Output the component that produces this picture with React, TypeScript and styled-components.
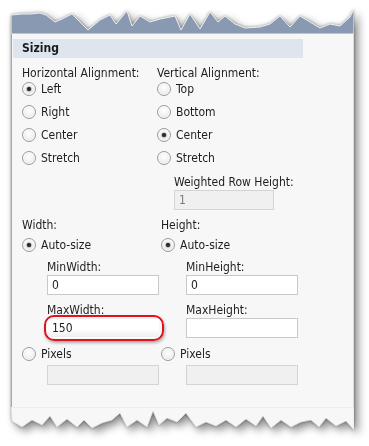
import React from "react";
import styled, { createGlobalStyle, css } from "styled-components";

const Global = createGlobalStyle`
  html, body { margin: 0; padding: 0; background: #ffffff; }
  body {
    font-family: "DejaVu Sans Condensed", "DejaVu Sans", Verdana, sans-serif;
    font-stretch: condensed;
    font-size: 12px;
    color: #1e1e1e;
  }
`;

const Page = styled.div`
  width: 369px;
  height: 446px;
  box-sizing: border-box;
  padding: 8px 0 0 11px;
  overflow: hidden;
`;

const Sheet = styled.div`
  width: 343px;
  display: flex;
  flex-direction: column;
  filter: drop-shadow(0 0 1.5px rgba(0, 0, 0, 0.35)) drop-shadow(4px 4px 4px rgba(0, 0, 0, 0.45));
`;

const Edge = styled.svg`
  display: block;
  width: 343px;
`;

const Body = styled.div`
  height: 373px;
  box-sizing: border-box;
  background: #f7f7f7;
  border-left: 1px solid #a8a8a8;
  border-right: 1px solid #dcdcdc;
  padding-top: 5px;
`;

const Header = styled.div`
  margin-left: 1px;
  width: 290px;
  height: 19px;
  line-height: 19px;
  background: #dfe5ee;
  padding-left: 9px;
  box-sizing: border-box;
  font-weight: bold;
  font-size: 12px;
  color: #1a1a1a;
`;

const Section = styled.div<{ $first: number; $top: number }>`
  display: grid;
  grid-template-columns: ${(p) => p.$first}px 1fr;
  padding-left: 10px;
  margin-top: ${(p) => p.$top}px;
`;

const Column = styled.div`
  display: flex;
  flex-direction: column;
`;

const Label = styled.div<{ $top?: number; $indent?: number }>`
  height: 16px;
  line-height: 16px;
  margin-top: ${(p) => p.$top ?? 0}px;
  margin-left: ${(p) => p.$indent ?? 0}px;
  white-space: nowrap;
`;

const RadioList = styled.div`
  display: flex;
  flex-direction: column;
  gap: 7px;
`;

const RadioRow = styled.div<{ $top?: number }>`
  display: flex;
  align-items: center;
  gap: 5px;
  height: 16px;
  margin-top: ${(p) => p.$top ?? 0}px;
  white-space: nowrap;
`;

const RadioCircle = styled.span<{ $checked?: boolean }>`
  width: 14px;
  height: 14px;
  box-sizing: border-box;
  border-radius: 50%;
  border: 1px solid #9b9b9b;
  background: radial-gradient(circle at 50% 40%, #ffffff 0%, #f3f3f3 45%, #d5d5d5 100%);
  box-shadow: inset 0 0 0 1px rgba(255, 255, 255, 0.8);
  display: flex;
  align-items: center;
  justify-content: center;
  flex: none;
  ${(p) =>
    p.$checked &&
    css`
      &::after {
        content: "";
        width: 4px;
        height: 4px;
        border-radius: 50%;
        background: #2a2a2a;
        box-shadow: 0 0 1px 0.5px rgba(40, 40, 40, 0.6);
      }
    `}
`;

const Field = styled.div<{ $top?: number; $indent?: number; $width: number; $disabled?: boolean; $highlight?: boolean }>`
  position: relative;
  width: ${(p) => p.$width}px;
  height: 20px;
  box-sizing: border-box;
  margin-top: ${(p) => p.$top ?? 0}px;
  margin-left: ${(p) => p.$indent ?? 0}px;
  border: 1px solid ${(p) => (p.$disabled ? "#d4d4d4" : "#c9c9c9")};
  background: ${(p) => (p.$disabled ? "#f0f0f0" : "#ffffff")};
  color: ${(p) => (p.$disabled ? "#7a7a7a" : "#222222")};
  padding-left: 4px;
  line-height: 18px;
  ${(p) =>
    p.$highlight &&
    css`
      border-color: transparent;
      background: linear-gradient(#ffffff 55%, #efefef);
      &::after {
        content: "";
        position: absolute;
        top: -4px;
        left: -4px;
        right: -6px;
        bottom: -4px;
        border: 2px solid #e0121c;
        border-radius: 10px;
        box-shadow: 1px 2px 3px rgba(0, 0, 0, 0.3);
      }
    `}
`;

const Radio = ({ label, checked, top }: { label: string; checked?: boolean; top?: number }) => (
  <RadioRow $top={top}>
    <RadioCircle $checked={checked} />
    <span>{label}</span>
  </RadioRow>
);

const SizeColumn = ({
  title,
  min,
  max,
  maxValue,
  highlight,
}: {
  title: string;
  min: string;
  max: string;
  maxValue: string;
  highlight?: boolean;
}) => (
  <Column>
    <Label>{title}</Label>
    <Radio label="Auto-size" checked top={4} />
    <Label $top={6} $indent={25}>{min}</Label>
    <Field $indent={25} $width={112}>0</Field>
    <Label $top={7} $indent={25}>{max}</Label>
    <Field $indent={25} $width={112} $highlight={highlight}>{maxValue}</Field>
    <Radio label="Pixels" top={8} />
    <Field $top={3} $indent={25} $width={112} $disabled />
  </Column>
);

const topPts: [number, number][] = [
  [0, 14], [9, 13], [22, 12], [30, 12], [40, 11], [46, 13], [55, 20], [62, 17], [72, 12],
  [88, 28], [100, 18], [110, 13], [116, 22], [127, 9], [132, 24], [140, 14], [150, 20],
  [160, 17], [175, 14], [181, 28], [190, 12], [200, 27], [210, 10], [218, 20], [225, 14],
  [235, 22], [245, 26], [260, 25], [270, 22], [280, 14], [290, 25], [300, 14], [310, 20],
  [320, 26], [330, 22], [340, 24], [350, 15], [354, 7],
];

const bottomPts: [number, number][] = [
  [0, 419], [10, 425], [20, 418], [30, 423], [38, 414], [45, 425], [55, 417], [65, 425],
  [72, 418], [80, 426], [90, 421], [100, 418], [108, 411], [115, 425], [125, 418], [135, 425],
  [141, 409], [147, 423], [155, 416], [165, 420], [174, 411], [184, 425], [194, 420],
  [204, 424], [214, 418], [224, 425], [234, 417], [244, 424], [251, 414], [259, 426],
  [269, 418], [279, 425], [289, 420], [299, 418], [307, 425], [314, 416], [324, 424],
  [334, 419], [342, 428],
];

const topPolygon =
  topPts.map(([x, y]) => `${Math.min(x - 11 < 0 ? 0 : x - 11, 343)},${y - 6}`).join(" ") +
  " 343,26 0,26";

const bottomPolygon =
  "0,0 343,0 " +
  bottomPts
    .slice()
    .reverse()
    .map(([x, y]) => `${x + 1 > 343 ? 343 : x + 1},${y - 405}`)
    .join(" ");

export default function App() {
  return (
    <>
      <Global />
      <Page>
        <Sheet>
          <Edge viewBox="0 0 343 26" height={26}>
            <polygon points={topPolygon} fill="#8a99b2" stroke="#eef1f5" strokeWidth={1} />
          </Edge>
          <Body>
            <Header>Sizing</Header>
            <Section $first={135} $top={7}>
              <Column>
                <Label>Horizontal Alignment:</Label>
                <RadioList>
                  <Radio label="Left" checked />
                  <Radio label="Right" />
                  <Radio label="Center" />
                  <Radio label="Stretch" />
                </RadioList>
              </Column>
              <Column>
                <Label>Vertical Alignment:</Label>
                <RadioList>
                  <Radio label="Top" />
                  <Radio label="Bottom" />
                  <Radio label="Center" checked />
                  <Radio label="Stretch" />
                </RadioList>
                <Label $top={8} $indent={17}>Weighted Row Height:</Label>
                <Field $indent={17} $width={100} $disabled>1</Field>
              </Column>
            </Section>
            <Section $first={139} $top={7}>
              <SizeColumn title="Width:" min="MinWidth:" max="MaxWidth:" maxValue="150" highlight />
              <SizeColumn title="Height:" min="MinHeight:" max="MaxHeight:" maxValue="" />
            </Section>
          </Body>
          <Edge viewBox="0 0 343 25" height={25}>
            <polygon points={bottomPolygon} fill="#f7f7f7" stroke="#dedede" strokeWidth={0.8} />
          </Edge>
        </Sheet>
      </Page>
    </>
  );
}
